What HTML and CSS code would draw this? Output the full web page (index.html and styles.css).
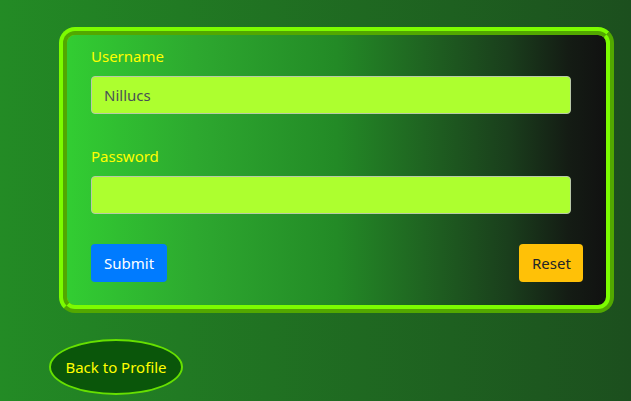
FILE: index.html
```html
<!DOCTYPE html>
<html>
<head>
<meta charset="utf-8">
<link rel="stylesheet" href="styles.css">
</head>
<body>
<main class="page">
  <form class="card">
    <div class="field">
      <label class="label" for="user">Username</label>
      <input class="input" id="user" type="text" value="Nillucs">
    </div>
    <div class="field">
      <label class="label" for="pass">Password</label>
      <input class="input" id="pass" type="password" value="">
    </div>
    <div class="actions">
      <button type="button" class="btn btn-submit">Submit</button>
      <button type="button" class="btn btn-reset">Reset</button>
    </div>
  </form>
  <div class="back-row">
    <a class="back" href="#">Back to Profile</a>
  </div>
</main>
</body>
</html>
```
FILE: styles.css
```css
html, body {
  margin: 0;
  height: 100%;
}
body {
  background: linear-gradient(to right, #238b25, #1c4f1e);
  font-family: "Noto Sans", "Open Sans", sans-serif;
  font-size: 15px;
  overflow: hidden;
}
.page {
  padding: 27px 0 0 49px;
  display: flex;
  flex-direction: column;
  align-items: flex-start;
}
.card {
  box-sizing: border-box;
  width: 555px;
  margin: 0 0 0 10px;
  border: 8px ridge #7cfc00;
  border-radius: 16px;
  padding: 9px 23px 23px 24px;
  background: linear-gradient(to right, #32cd32 0%, #2da82f 24%, #238a26 50%, #1f6421 66%, #1a3e1c 82%, #141c14 93%, #111 100%);
  display: flex;
  flex-direction: column;
}
.field {
  display: flex;
  flex-direction: column;
  margin-bottom: 30px;
}
.label {
  color: #ffff00;
  line-height: 24px;
  margin-bottom: 8px;
}
.input {
  box-sizing: border-box;
  width: 480px;
  height: 38px;
  border: 1px solid #b9c9a8;
  border-radius: 4px;
  background: #adff2f;
  color: #495057;
  font: inherit;
  padding: 6px 12px;
  outline: none;
}
.actions {
  display: flex;
  justify-content: space-between;
}
.btn {
  height: 38px;
  border: 1px solid transparent;
  border-radius: 4px;
  font: inherit;
  padding: 6px 12px;
  line-height: 24px;
}
.btn-submit {
  background: #007bff;
  color: #fff;
  width: 76px;
}
.btn-reset {
  background: #ffc107;
  color: #212529;
  width: 64px;
}
.back-row {
  margin-top: 26px;
}
.back {
  display: flex;
  align-items: center;
  justify-content: center;
  box-sizing: border-box;
  width: 134px;
  height: 56px;
  border: 2px solid #66e000;
  border-radius: 50%;
  background: #0a560a;
  color: #ffff00;
  text-decoration: none;
}
```
